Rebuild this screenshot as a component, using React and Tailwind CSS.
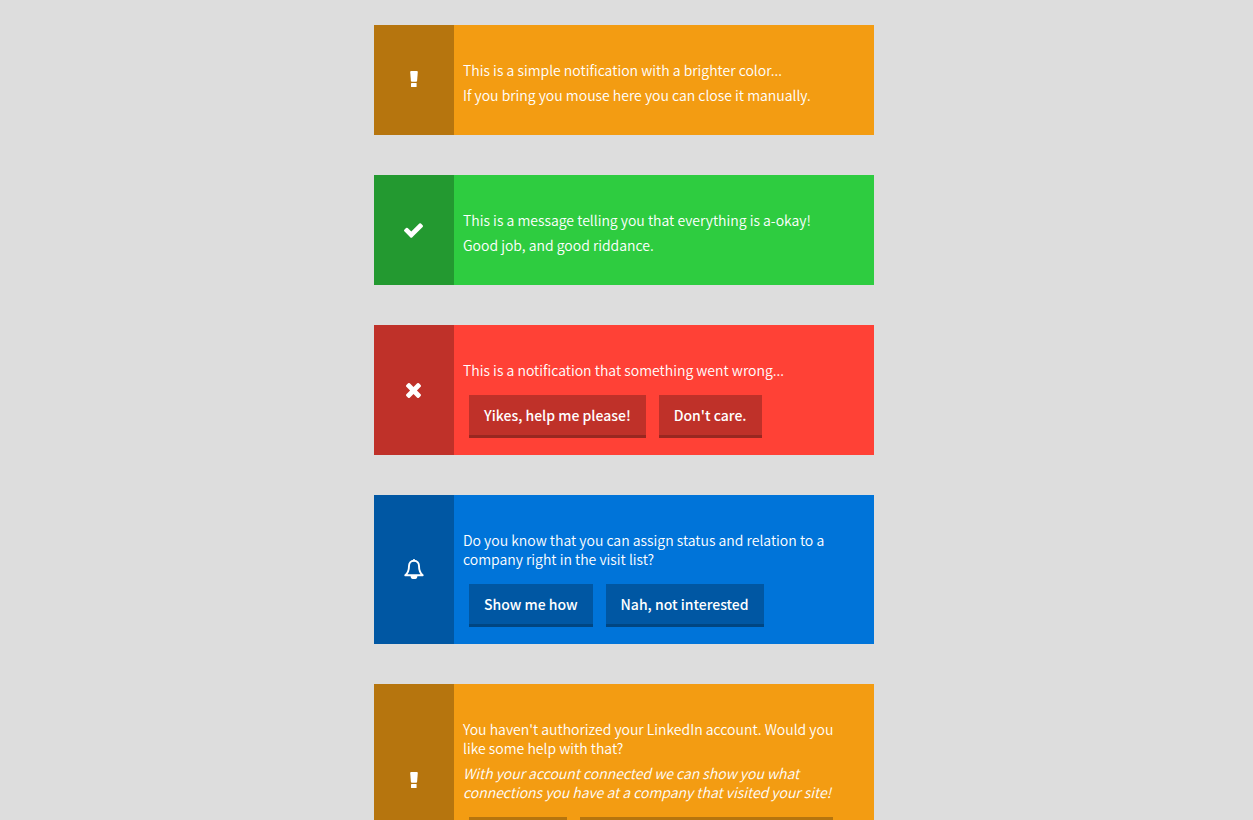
const ExclamationIcon = () => (
  <svg viewBox="0 0 8 18" className="h-[18px] w-2" fill="currentColor" aria-hidden="true">
    <path d="M1.200 0h5.600q1 0 1 .9L7.100 9.800q-.1.9-.9.9H1.800q-.8 0-.9-.9L.2.9Q.2 0 1.200 0Z" />
    <path d="M1.600 12h4.400q.6 0 .6.6v2.900q0 .6-.6.6H1.600q-.6 0-.6-.6v-2.900q0-.6.6-.6Z" />
  </svg>
);

const CheckIcon = () => (
  <svg viewBox="121 334 1550 1188" className="h-[15px] w-[19px]" fill="currentColor" aria-hidden="true">
    <path d="M1671 566q0 40-28 68l-724 724-136 136q-28 28-68 28t-68-28l-136-136-362-362q-28-28-28-68t28-68l136-136q28-28 68-28t68 28l294 295 656-657q28-28 68-28t68 28l136 136q28 28 28 68z" />
  </svg>
);

const CrossIcon = () => (
  <svg viewBox="302 366 1188 1188" className="h-[15px] w-[15px]" fill="currentColor" aria-hidden="true">
    <path d="M1490 1322q0 40-28 68l-136 136q-28 28-68 28t-68-28l-294-294-294 294q-28 28-68 28t-68-28l-136-136q-28-28-28-68t28-68l294-294-294-294q-28-28-28-68t28-68l136-136q28-28 68-28t68 28l294 294 294-294q28-28 68-28t68 28l136 136q28 28 28 68t-28 68l-294 294 294 294q28 28 28 68z" />
  </svg>
);

const BellIcon = () => (
  <svg viewBox="0 0 20 21" className="h-[21px] w-5" fill="none" stroke="currentColor" aria-hidden="true">
    <path strokeWidth="1.9" strokeLinejoin="round" d="M10 1.800C6.600 1.800 5 4.400 5 7.100C5 11.500 3.900 14.100 1.300 16.300H18.700C16.100 14.100 15 11.500 15 7.100C15 4.400 13.400 1.800 10 1.800Z" />
    <path fill="currentColor" stroke="none" d="M8.900 1a1.100 1 0 0 1 2.200 0v1.200H8.900ZM6.600 16.900h6.800a3.400 3.200 0 0 1-6.800 0Z" />
  </svg>
);

const tones = {
  warning: { card: "bg-[#f39c12]", dark: "bg-[#b6750e]", edge: "border-[#925e0b]" },
  success: { card: "bg-[#2ecc40]", dark: "bg-[#239930]", edge: "border-[#1c7a26]" },
  error: { card: "bg-[#ff4136]", dark: "bg-[#bf3129]", edge: "border-[#992720]" },
  info: { card: "bg-[#0074d9]", dark: "bg-[#0057a3]", edge: "border-[#004682]" },
};

const notifications = [
  {
    tone: "warning",
    Icon: ExclamationIcon,
    lines: [
      { text: "This is a simple notification with a brighter color..." },
      { text: "If you bring you mouse here you can close it manually." },
    ],
  },
  {
    tone: "success",
    Icon: CheckIcon,
    lines: [
      { text: "This is a message telling you that everything is a-okay!" },
      { text: "Good job, and good riddance." },
    ],
  },
  {
    tone: "error",
    Icon: CrossIcon,
    lines: [{ text: "This is a notification that something went wrong..." }],
    actions: ["Yikes, help me please!", "Don't care."],
  },
  {
    tone: "info",
    Icon: BellIcon,
    lines: [{ text: "Do you know that you can assign status and relation to a company right in the visit list?" }],
    actions: ["Show me how", "Nah, not interested"],
  },
  {
    tone: "warning",
    Icon: ExclamationIcon,
    lines: [
      { text: "You haven't authorized your LinkedIn account. Would you like some help with that?" },
      { text: "With your account connected we can show you what connections you have at a company that visited your site!", italic: true },
    ],
    actions: ["Yes please", "No thanks, maybe another time..."],
  },
];

function Notification({ tone, Icon, lines, actions }) {
  const { card, dark, edge } = tones[tone];
  return (
    <section className={`flex w-full max-w-[500px] text-white ${card}`}>
      <div className={`flex w-20 shrink-0 items-center justify-center pr-px ${dark}`}>
        <Icon />
      </div>
      <div className={`min-w-0 flex-1 pt-9 pr-8 pl-[9px] ${actions ? "pb-[17px]" : "pb-[30px]"}`}>
        <div className="flex flex-col gap-1.5">
          {lines.map(({ text, italic }) => (
            <p key={text} className={italic ? "italic" : ""}>{text}</p>
          ))}
        </div>
        {actions && (
          <div className="mt-[15px] ml-1.5 flex gap-[13px]">
            {actions.map((label) => (
              <button key={label} type="button" className={`h-[43px] border-b-3 px-[15px] font-medium whitespace-nowrap ${dark} ${edge}`}>
                {label}
              </button>
            ))}
          </div>
        )}
      </div>
    </section>
  );
}

export default function App() {
  return (
    <main className="flex h-screen flex-col items-center overflow-hidden bg-[#dddddd] pr-[5px] font-['Noto_Sans_CJK_SC','Noto_Sans',sans-serif] text-[14px] leading-[19px] font-[350]">
      <div className="flex w-full flex-col items-center gap-10 pt-[25px]">
        {notifications.map((item) => (
          <Notification key={item.lines[0].text} {...item} />
        ))}
      </div>
    </main>
  );
}
